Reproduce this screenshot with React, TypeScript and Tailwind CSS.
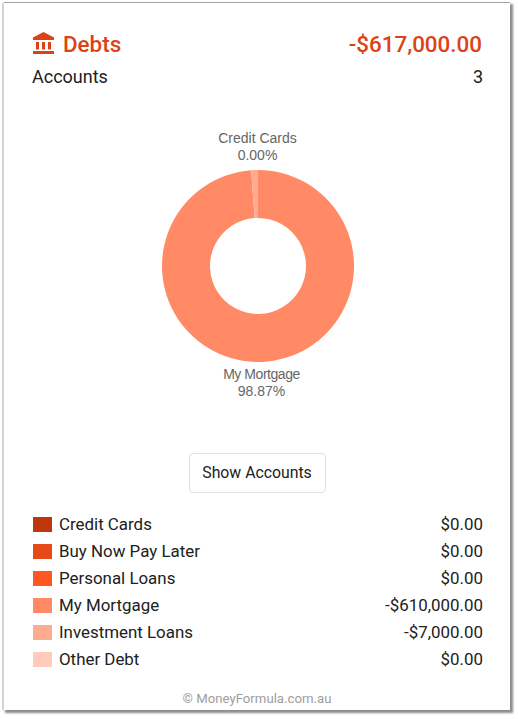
import React from "react";

const rows = [
  ["Credit Cards", "$0.00", "#BF360C"],
  ["Buy Now Pay Later", "$0.00", "#E64A19"],
  ["Personal Loans", "$0.00", "#FF5722"],
  ["My Mortgage", "-$610,000.00", "#FF8A65"],
  ["Investment Loans", "-$7,000.00", "#FFAB91"],
  ["Other Debt", "$0.00", "#FFCCBC"],
];

function polar(r: number, deg: number) {
  const a = ((deg - 90) * Math.PI) / 180;
  return `${96 + r * Math.cos(a)} ${96 + r * Math.sin(a)}`;
}

function Slice({ from, to, fill }: { from: number; to: number; fill: string }) {
  const large = to - from > 180 ? 1 : 0;
  return (
    <path
      fill={fill}
      d={`M${polar(96, from)} A96 96 0 ${large} 1 ${polar(96, to)} L${polar(48, to)} A48 48 0 ${large} 0 ${polar(48, from)} Z`}
    />
  );
}

export default function App() {
  return (
    <div className="w-[518px] h-[719px] bg-white pt-[3px] pl-[4px] font-['Roboto',sans-serif]">
      <div className="w-[506px] h-[707px] bg-white shadow-[0_-1px_0_#a3a3a3,-2px_0_0_#d4d4d4,2px_2px_2px_1px_rgba(0,0,0,0.45)] pt-[28px] pl-[28px] pr-[28px] flex flex-col">
        <div className="flex items-center justify-between h-[26px]">
          <div className="flex items-center gap-[9px] text-[#DD4217]">
            <svg width="21" height="22" viewBox="0 0 21 22" fill="currentColor" className="mt-[-3px] ml-[1px]">
              <path d="M10.5 0 0 5.5V8h21V5.5z" />
              <rect x="3" y="10" width="3" height="7.5" />
              <rect x="9" y="10" width="3" height="7.5" />
              <rect x="15" y="10" width="3" height="7.5" />
              <rect x="0" y="19" width="21" height="3" />
            </svg>
            <span className="text-[22.4px] font-medium leading-none">Debts</span>
          </div>
          <span className="text-[22.4px] font-medium leading-none text-[#DD4217]">-$617,000.00</span>
        </div>
        <div className="flex justify-between mt-[8px] mr-[-1px] text-[18px] leading-[24px] text-[#212121]">
          <span>Accounts</span>
          <span>3</span>
        </div>
        <div className="flex flex-col items-center mt-[41px] font-['Liberation_Sans',sans-serif] text-[14px] leading-[17px] text-[#666666]">
          <div className="ml-[1px]">Credit Cards</div>
          <div className="ml-[1px]">0.00%</div>
          <svg width="192" height="192" viewBox="0 0 192 192" className="mt-[6px] mb-[4px] ml-[2px]">
            <Slice from={0} to={355.93} fill="#FF8A65" />
            <Slice from={355.93} to={360} fill="#FFAB91" />
          </svg>
          <div className="ml-[9px] tracking-[-0.45px]">My Mortgage</div>
          <div className="ml-[9px]">98.87%</div>
        </div>
        <div className="flex justify-center mt-[53px]">
          <button className="w-[137px] h-[40px] bg-white border border-[#E0E0E0] rounded-[4px] text-[15.8px] text-[#212121]">
            Show Accounts
          </button>
        </div>
        <div className="mt-[18px] ml-[1px] mr-[-1px] flex flex-col">
          {rows.map(([label, value, color]) => (
            <div key={label} className="flex items-center justify-between h-[27px] text-[16.9px] text-[#212121]">
              <div className="flex items-center gap-[7px]">
                <span className="w-[19px] h-[15px]" style={{ backgroundColor: color }} />
                <span>{label}</span>
              </div>
              <span>{value}</span>
            </div>
          ))}
        </div>
        <div className="mt-[16px] text-center text-[13.2px] text-[#9E9E9E]">© MoneyFormula.com.au</div>
      </div>
    </div>
  );
}
